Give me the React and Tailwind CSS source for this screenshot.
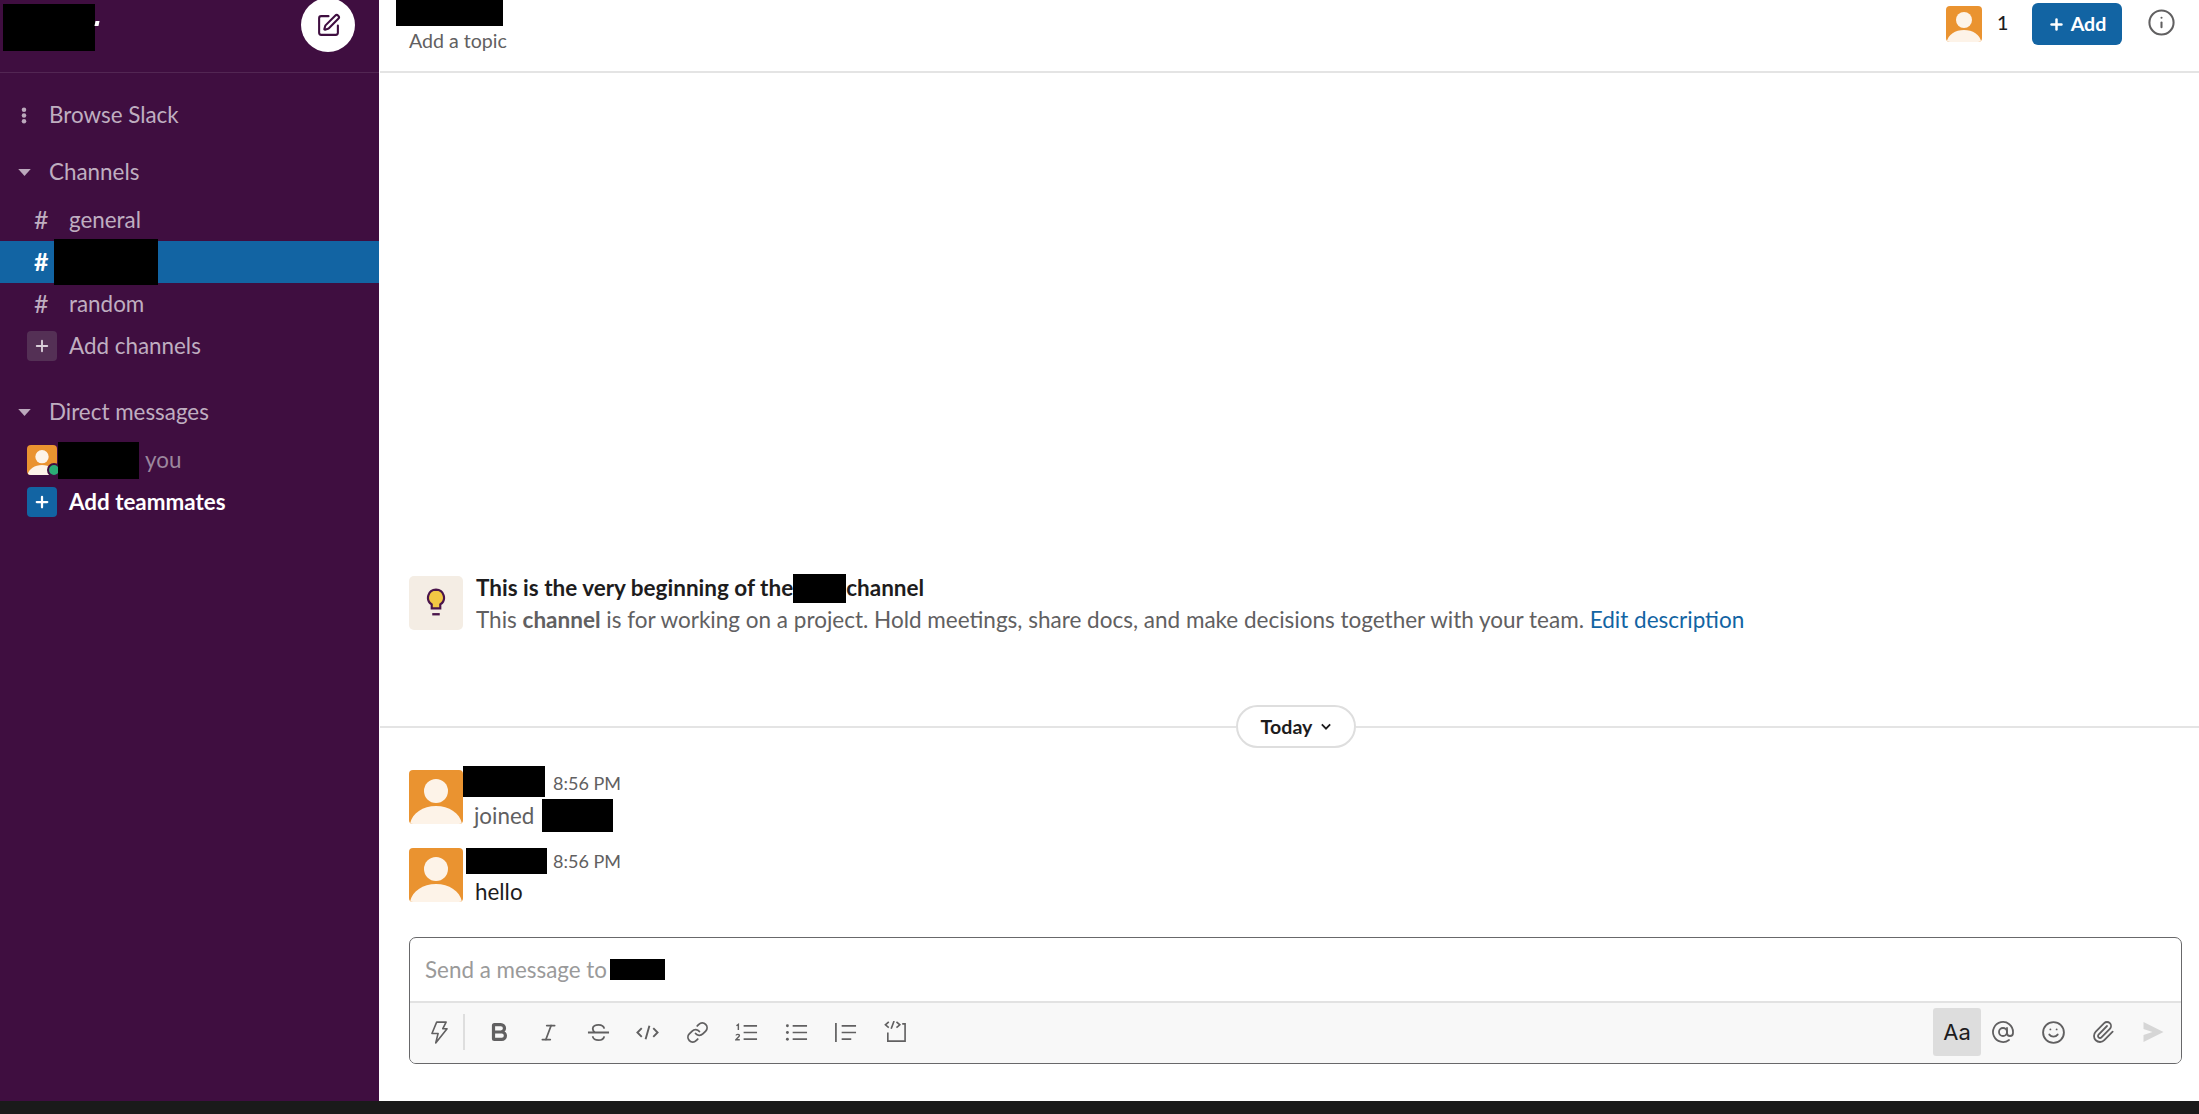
import React from "react";
import { Bold, Info, Italic, Link, Paperclip, Plus, Smile, SquarePen, AtSign } from "lucide-react";

const Avatar = ({ className }) => (
  <svg viewBox="0 0 54 54" className={`rounded-[4px] shrink-0 ${className}`}>
    <rect width="54" height="54" fill="#ea9330" />
    <circle cx="27" cy="21" r="12" fill="#fdf3e8" />
    <path d="M1 54c2-11 13-18 26-18s24 7 26 18z" fill="#fdf3e8" />
  </svg>
);

const Caret = () => (
  <svg viewBox="0 0 14 9" className="w-[13px] h-[8px] ml-[18px] mr-[18px]">
    <path d="M0 1h14L7 9z" fill="#bca9bd" />
  </svg>
);

const SideRow = ({ children, className = "" }) => (
  <div className={`flex items-center h-[42px] text-[22.4px] text-[#bfaec0] ${className}`}>{children}</div>
);

const Channel = ({ name }) => (
  <SideRow>
    <span className="w-[69px] shrink-0 pl-[34px] text-[25px]">#</span>
    <span>{name}</span>
  </SideRow>
);

const Sidebar = () => (
  <div className="w-[379px] shrink-0 bg-[#3f0e40]">
    <div className="flex justify-between h-[73px] border-b border-[#522653] pl-[3px] pr-[24px]">
      <div className="flex pt-[4px]">
        <div className="w-[92px] h-[47px] bg-black" />
        <div className="w-[4px] h-[5px] mt-[17px] bg-white -skew-x-12" />
      </div>
      <div className="w-[54px] h-[54px] -mt-[2px] rounded-full bg-white flex items-center justify-center">
        <SquarePen className="w-[25px] h-[25px] text-[#3f0e40]" strokeWidth={2} />
      </div>
    </div>
    <div className="pt-[21px]">
      <SideRow>
        <svg viewBox="0 0 6 18" className="w-[6px] h-[17px] ml-[21px] mr-[22px]">
          <circle cx="3" cy="3" r="2.4" fill="#bca9bd" />
          <circle cx="3" cy="9" r="2.4" fill="#bca9bd" />
          <circle cx="3" cy="15" r="2.4" fill="#bca9bd" />
        </svg>
        Browse Slack
      </SideRow>
      <SideRow className="mt-[15px]">
        <Caret />
        Channels
      </SideRow>
      <div className="mt-[6px]">
        <Channel name="general" />
        <div className="flex items-center h-[42px] bg-[#1264a3] text-[25px] font-bold text-white">
          <span className="pl-[34px] w-[54px] shrink-0">#</span>
          <div className="w-[104px] h-[46px] bg-black" />
        </div>
        <Channel name="random" />
        <SideRow>
          <div className="w-[30px] h-[30px] ml-[27px] mr-[12px] rounded-[4px] bg-[#543055] flex items-center justify-center">
            <Plus className="w-[18px] h-[18px] text-[#d9cfd9]" strokeWidth={2.5} />
          </div>
          Add channels
        </SideRow>
      </div>
      <SideRow className="mt-[24px]">
        <Caret />
        Direct messages
      </SideRow>
      <div className="mt-[6px]">
        <SideRow>
          <div className="relative w-[30px] h-[30px] ml-[27px] mr-[1px]">
            <Avatar className="w-[30px] h-[30px]" />
            <div className="absolute left-[20px] top-[18px] w-[14px] h-[14px] rounded-full bg-[#2bac76] border-2 border-[#3f0e40]" />
          </div>
          <div className="relative w-[81px] h-[37px] bg-black" />
          <span className="ml-[6px] text-[#9c869d]">you</span>
        </SideRow>
        <SideRow className="font-bold text-white">
          <div className="w-[30px] h-[30px] ml-[27px] mr-[12px] rounded-[4px] bg-[#1264a3] flex items-center justify-center">
            <Plus className="w-[18px] h-[18px] text-white" strokeWidth={3} />
          </div>
          Add teammates
        </SideRow>
      </div>
    </div>
  </div>
);

const Header = () => (
  <div className="flex justify-between h-[73px] border-b-2 border-[#e4e4e4] shrink-0">
    <div className="pl-[16px]">
      <div className="w-[107px] h-[26px] bg-black" />
      <div className="ml-[13px] mt-[3px] text-[19.6px] leading-[24px] text-[#616061]">Add a topic</div>
    </div>
    <div className="flex pr-[23px]">
      <Avatar className="w-[36px] h-[36px] mt-[6px]" />
      <div className="w-[50px] pl-[15px] pt-[11px] text-[19.6px] leading-[24px] font-medium text-[#1d1c1d]">1</div>
      <div className="flex items-center justify-center gap-[6px] w-[90px] h-[42px] mt-[3px] rounded-[6px] bg-[#1264a3] text-[19.6px] font-bold text-white">
        <Plus className="w-[17px] h-[17px]" strokeWidth={3.5} />
        Add
      </div>
      <Info className="w-[29px] h-[29px] ml-[25px] mt-[8px] text-[#616061]" strokeWidth={1.7} />
    </div>
  </div>
);

const Intro = () => (
  <div className="flex pl-[29px] mt-auto">
    <div className="w-[54px] h-[54px] mt-[4px] mr-[13px] rounded-[5px] bg-[#f4ede4] flex items-center justify-center">
      <svg viewBox="0 0 18 28" className="w-[20px] h-[30px]">
        <path d="M9 1.500a7.500 7.500 0 0 0-4 13.800V19h8v-3.700A7.500 7.500 0 0 0 9 1.500z" fill="#f2c744" stroke="#4a154b" strokeWidth="2" />
        <path d="M5.500 24.500h7" stroke="#4a154b" strokeWidth="2.200" />
      </svg>
    </div>
    <div className="text-[22.5px] leading-[32px]">
      <div className="flex items-center font-bold text-[#1d1c1d]">
        This is the very beginning of the
        <span className="inline-block w-[53px] h-[29px] bg-black" />
        channel
      </div>
      <div className="text-[#616061]">
        This <span className="font-bold">channel</span> is for working on a project. Hold meetings, share docs, and make decisions together with your team.{" "}
        <span className="text-[#1264a3]">Edit description</span>
      </div>
    </div>
  </div>
);

const DayDivider = () => (
  <div className="flex items-center mt-[69px] h-[43px]">
    <div className="w-[856px] border-t-2 border-[#e4e4e4]" />
    <div className="flex items-center justify-center gap-[9px] w-[120px] h-[43px] rounded-full border-2 border-[#dedede] bg-white text-[19.6px] font-bold text-[#1d1c1d]">
      Today
      <svg viewBox="0 0 12 8" className="w-[10px] h-[7px]">
        <path d="M1 1.500l5 5 5-5" fill="none" stroke="#1d1c1d" strokeWidth="2.200" />
      </svg>
    </div>
    <div className="flex-1 border-t-2 border-[#e4e4e4]" />
  </div>
);

const Messages = () => (
  <div className="pl-[29px] mt-[18px]">
    <div className="flex h-[79px]">
      <Avatar className="w-[54px] h-[54px] mt-[4px]" />
      <div>
        <div className="flex h-[33px]">
          <div className="w-[82px] h-[31px] bg-black" />
          <span className="ml-[8px] mt-[5px] text-[18px] leading-[24px] text-[#616061]">8:56 PM</span>
        </div>
        <div className="flex items-center ml-[11px] text-[22.4px] leading-[32px] text-[#616061]">
          joined
          <div className="w-[71px] h-[33px] ml-[8px] bg-black" />
        </div>
      </div>
    </div>
    <div className="flex h-[80px]">
      <Avatar className="w-[54px] h-[54px] mt-[3px]" />
      <div>
        <div className="flex h-[29px] pt-[3px]">
          <div className="w-[81px] h-[26px] ml-[3px] bg-black" />
          <span className="ml-[6px] mt-[1px] text-[18px] leading-[24px] text-[#616061]">8:56 PM</span>
        </div>
        <div className="ml-[12px] mt-[1px] text-[22.4px] leading-[34px] text-[#1d1c1d]">hello</div>
      </div>
    </div>
  </div>
);

const Strike = () => (
  <svg viewBox="0 0 24 24" className="w-[23px] h-[23px]" fill="none" stroke="currentColor" strokeWidth="1.900">
    <path d="M1 12h22M18 8c-.5-2.500-3-4-6-4s-6 1.500-6 4c0 1.500.8 3 2.500 4M18 16c-.5 2.500-3 4-6 4s-6-1.500-6-4" />
  </svg>
);

const InlineCode = () => (
  <svg viewBox="0 0 24 24" className="w-[23px] h-[23px]" fill="none" stroke="currentColor" strokeWidth="2">
    <path d="M6 7.500L1.500 12 6 16.500M18 7.500l4.500 4.500-4.500 4.500M14 5l-4 14" />
  </svg>
);

const Ordered = () => (
  <svg viewBox="0 0 24 24" className="w-[23px] h-[23px]" fill="none" stroke="currentColor" strokeWidth="1.800">
    <path d="M9 5h14M9 12h14M9 19h14" />
    <path d="M1.500 5l2-1.500v6M1 15c.5-1.500 4-1.500 3.500.5-.3 1-2.500 2.500-3.500 4h4" strokeWidth="1.500" />
  </svg>
);

const Bullets = () => (
  <svg viewBox="0 0 24 24" className="w-[23px] h-[23px]" fill="none" stroke="currentColor" strokeWidth="1.800">
    <path d="M8 5h15M8 12h15M8 19h15" />
    <circle cx="2.500" cy="5" r="1.500" fill="currentColor" stroke="none" />
    <circle cx="2.500" cy="12" r="1.500" fill="currentColor" stroke="none" />
    <circle cx="2.500" cy="19" r="1.500" fill="currentColor" stroke="none" />
  </svg>
);

const QuoteBar = () => (
  <svg viewBox="0 0 24 24" className="w-[23px] h-[23px]" fill="none" stroke="currentColor" strokeWidth="1.800">
    <path d="M2 2v20M8 5h15M8 12h15M8 19h10" />
  </svg>
);

const CodeBlock = () => (
  <svg viewBox="0 0 24 24" className="w-[23px] h-[23px]" fill="none" stroke="currentColor" strokeWidth="1.700">
    <path d="M5 1L1.500 4 5 7M13 1l3.500 3L13 7M10.500 0L7.500 8M19 3h3v18H4v-9" />
  </svg>
);

const Bolt = () => (
  <svg viewBox="0 0 18 24" className="w-[17px] h-[23px]" fill="none" stroke="currentColor" strokeWidth="1.700" strokeLinejoin="round">
    <path d="M6 1h10l-3.500 7H17L5 23l2.500-10H1z" />
  </svg>
);

const Send = () => (
  <svg viewBox="0 0 20 20" className="w-[21px] h-[20px]">
    <path d="M0 0l20 10L0 20v-7l9-3-9-3z" fill="#d6d6d6" />
  </svg>
);

const ToolBtn = ({ children, className = "w-[49.5px]" }) => (
  <div className={`flex items-center justify-center h-[23px] text-[#616061] ${className}`}>{children}</div>
);

const Composer = () => (
  <div className="mt-[12px] ml-[29px] mr-[17px] h-[127px] shrink-0 rounded-[7px] border border-[#68686a] overflow-hidden">
    <div className="flex items-center h-[63px] pl-[15px] text-[22.4px] text-[#9a9a9a]">
      Send a message to
      <div className="w-[55px] h-[21px] ml-[3px] bg-black" />
    </div>
    <div className="flex items-center justify-between h-[62px] border-t-2 border-[#e2e2e2] bg-[#f8f8f8] pb-[2px]">
      <div className="flex items-center">
        <ToolBtn className="w-[53px] pl-[6px]"><Bolt /></ToolBtn>
        <div className="w-[2px] h-[36px] bg-[#dedede]" />
        <ToolBtn className="w-[59px] pl-[9px]"><Bold className="w-[22px] h-[22px]" strokeWidth={3.5} /></ToolBtn>
        <ToolBtn><Italic className="w-[21px] h-[21px]" strokeWidth={2} /></ToolBtn>
        <ToolBtn><Strike /></ToolBtn>
        <ToolBtn><InlineCode /></ToolBtn>
        <ToolBtn><Link className="w-[23px] h-[23px]" strokeWidth={1.9} /></ToolBtn>
        <ToolBtn><Ordered /></ToolBtn>
        <ToolBtn><Bullets /></ToolBtn>
        <ToolBtn><QuoteBar /></ToolBtn>
        <ToolBtn><CodeBlock /></ToolBtn>
      </div>
      <div className="flex items-center pr-[3px]">
        <div className="flex items-center justify-center w-[48px] h-[48px] -mr-[3px] rounded-[3px] bg-[#dddddd] font-[Inter,sans-serif] text-[22px] text-[#1d1c1d]">Aa</div>
        <ToolBtn className="w-[50px]"><AtSign className="w-[24px] h-[24px]" strokeWidth={1.8} /></ToolBtn>
        <ToolBtn className="w-[50px]"><Smile className="w-[25px] h-[25px]" strokeWidth={1.8} /></ToolBtn>
        <ToolBtn className="w-[50px]"><Paperclip className="w-[24px] h-[24px]" strokeWidth={1.8} /></ToolBtn>
        <ToolBtn className="w-[50px]"><Send /></ToolBtn>
      </div>
    </div>
  </div>
);

const App = () => (
  <div className="h-screen bg-[#1a1a1a] font-[Lato,sans-serif] overflow-hidden">
    <div className="flex h-[1101px]">
      <Sidebar />
      <div className="flex-1 min-w-0 flex flex-col bg-white pb-[37px] pl-px">
        <Header />
        <Intro />
        <DayDivider />
        <Messages />
        <Composer />
      </div>
    </div>
  </div>
);

export default App;
